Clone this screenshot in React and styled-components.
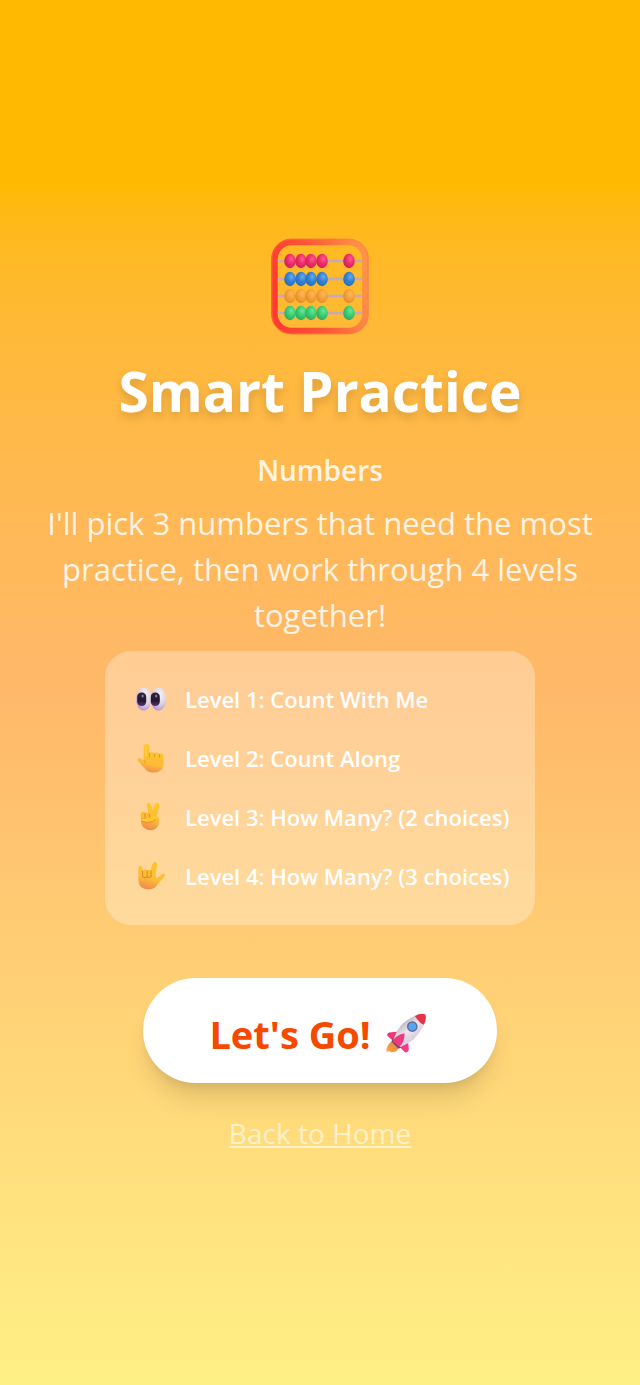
import styled, { createGlobalStyle } from 'styled-components';

const GlobalStyle = createGlobalStyle`
	* {
		box-sizing: border-box;
		margin: 0;
		padding: 0;
	}
	body {
		font-family: 'Segoe UI', 'Open Sans', sans-serif;
	}
`;

const beadRows = [
	{ y: 23, fill: 'url(#beadPink)' },
	{ y: 41, fill: 'url(#beadBlue)' },
	{ y: 58, fill: 'url(#beadOrange)' },
	{ y: 75, fill: 'url(#beadGreen)' },
];

const beadColumns = [19, 30, 40, 51, 78];

const beadColors = [
	['beadPink', '#ff5c92', '#ee2c68', '#c9205a'],
	['beadBlue', '#63adf0', '#3480cf', '#2a6cb8'],
	['beadOrange', '#ffba55', '#f6a038', '#e08a2b'],
	['beadGreen', '#6be894', '#3bcb72', '#2aa95e'],
];

const Abacus = () => (
	<svg width="98" height="98" viewBox="0 0 98 98" aria-hidden="true">
		<defs>
			<linearGradient id="frame" x1="0" y1="0.6" x2="1" y2="0.4">
				<stop offset="0" stopColor="#ff3b2f" />
				<stop offset="0.45" stopColor="#fc5636" />
				<stop offset="1" stopColor="#ff9248" />
			</linearGradient>
			{beadColors.map(([id, light, base, dark]) => (
				<radialGradient key={id} id={id} cx="0.62" cy="0.35" r="0.7">
					<stop offset="0" stopColor={light} />
					<stop offset="0.5" stopColor={base} />
					<stop offset="1" stopColor={dark} />
				</radialGradient>
			))}
		</defs>
		<rect x="3.5" y="4" width="91" height="89" rx="17" fill="none" stroke="url(#frame)" strokeWidth="6.5" />
		<rect x="1" y="1.5" width="96" height="94" rx="19" fill="none" stroke="#ff7a4a" strokeOpacity="0.45" strokeWidth="1.5" />
		{beadRows.map(({ y, fill }) => (
			<g key={y}>
				<rect x="7" y={y - 1.3} width="84" height="2.6" fill="#c5a9b4" />
				{beadColumns.map((x) => (
					<ellipse key={x} cx={x} cy={y} rx="5.8" ry="7.2" fill={fill} />
				))}
			</g>
		))}
	</svg>
);

const Eyes = () => (
	<svg width="32" height="32" viewBox="0 0 32 32" aria-hidden="true">
		<defs>
			<radialGradient id="eyeWhite" cx="0.6" cy="0.3" r="0.75">
				<stop offset="0" stopColor="#f6f2f7" />
				<stop offset="0.55" stopColor="#ddd4e2" />
				<stop offset="1" stopColor="#b291d7" />
			</radialGradient>
			<linearGradient id="pupil" x1="0" y1="0" x2="0" y2="1">
				<stop offset="0" stopColor="#32243c" />
				<stop offset="0.6" stopColor="#25172f" />
				<stop offset="1" stopColor="#56366f" />
			</linearGradient>
		</defs>
		<ellipse cx="8.6" cy="16" rx="7.7" ry="11.5" fill="url(#eyeWhite)" />
		<ellipse cx="23.4" cy="16" rx="7.7" ry="11.5" fill="url(#eyeWhite)" />
		<rect x="2.2" y="9.6" width="9" height="13.4" rx="4.2" fill="url(#pupil)" />
		<rect x="15.8" y="9.6" width="9" height="13.4" rx="4.2" fill="url(#pupil)" />
		<ellipse cx="7.6" cy="13" rx="1.2" ry="1.6" fill="#85788f" />
		<ellipse cx="21.2" cy="13" rx="1.2" ry="1.6" fill="#85788f" />
	</svg>
);

const PointUp = () => (
	<svg width="32" height="32" viewBox="-1 -1 34 34" aria-hidden="true">
		<defs>
			<linearGradient id="skinOne" x1="0.6" y1="0" x2="0.4" y2="1">
				<stop offset="0" stopColor="#ffc62c" />
				<stop offset="0.7" stopColor="#fdbb36" />
				<stop offset="1" stopColor="#ef8750" />
			</linearGradient>
		</defs>
		<path
			d="M8.2 4Q8.2 1 11.3 1Q14.3 1 14.3 4V10.5Q18.3 8.2 19.8 11.2Q23.4 9 25 12Q29.4 10 29.4 14.5V21.5Q29.4 31.5 18.8 31.5Q12.5 31.5 9.2 27L6 23.5L2.5 19.8Q.5 17.5 2.5 16.4Q4.5 15.4 8.2 18.5Z"
			fill="url(#skinOne)"
		/>
		<path d="M14.4 11V14.6M19.8 11.6V14.8M25 12.2V15.4M8.4 18.3Q10.2 20 10 21.5" fill="none" stroke="#e39a2c" strokeWidth="1" strokeLinecap="round" />
		<path d="M10.6 3V14" stroke="#ffd046" strokeWidth="1.4" strokeLinecap="round" />
	</svg>
);

const Victory = () => (
	<svg width="32" height="32" viewBox="-1 -1 34 34" aria-hidden="true">
		<defs>
			<linearGradient id="skinTwo" x1="0.6" y1="0" x2="0.4" y2="1">
				<stop offset="0" stopColor="#ffc829" />
				<stop offset="0.6" stopColor="#fcb837" />
				<stop offset="1" stopColor="#ed884e" />
			</linearGradient>
		</defs>
		<path
			d="M11.5 4Q10.8 1.4 13.3 1.1Q15.5 1 16.3 3.5L18 9.2L19.8 3Q20.7 .5 23 1.2Q25.4 2 24.8 4.6L22.5 14.5Q24.8 16.4 24.6 20.5Q24.2 30 15 30Q7.2 29.5 5.6 22.5L4.8 13.2Q5.2 9.8 8.4 10.6L10.2 11.5L13.2 11Z"
			fill="url(#skinTwo)"
		/>
		<path d="M5.8 18.4L13.6 17.6L16.4 14.6Q21 13.4 22.8 15.4Q23.8 17.6 20.4 18.6L17.2 20.8Q12 22.6 6.2 20.6Z" fill="#ffc731" />
		<path d="M6.4 20.6Q12 23 17.4 21L20.8 18.8M9.6 12.5V17.4M14.2 13L14.6 16" fill="none" stroke="#dd8f2c" strokeWidth="1" strokeLinecap="round" />
	</svg>
);

const LoveYou = () => (
	<svg width="32" height="32" viewBox="-1 -1 34 34" aria-hidden="true">
		<defs>
			<linearGradient id="skinThree" x1="0.6" y1="0" x2="0.3" y2="1">
				<stop offset="0" stopColor="#ffc52b" />
				<stop offset="0.6" stopColor="#fdbb35" />
				<stop offset="1" stopColor="#ee8853" />
			</linearGradient>
		</defs>
		<path
			d="M2.6 8Q2.5 5.1 4.6 5Q6.7 5 7 8V10.4Q9.6 8 12 10Q14 8.6 15.6 10L17.2 4Q18 .8 20.4 1.2Q22.9 1.6 22.5 4.5L20.8 15.6L22 18.4L27.5 14.2Q29.8 12.4 30.8 14.2Q31.4 15.7 29.5 17.6L23.8 23.8Q20.5 30.5 13.4 30.3Q3 30 2.6 21Z"
			fill="url(#skinThree)"
		/>
		<path d="M7 10.8V16.4M12 10.4V16.4M16 10.6V16M7.2 16.6Q9.8 18.8 12 16.6Q14.2 18.6 16.6 16" fill="none" stroke="#d98a2b" strokeWidth="1.1" strokeLinecap="round" />
	</svg>
);

const Rocket = () => (
	<svg width="42" height="42" viewBox="0 0 42 42" aria-hidden="true">
		<defs>
			<linearGradient id="rocketBody" x1="0.2" y1="0.2" x2="0.7" y2="0.8">
				<stop offset="0" stopColor="#b7abbb" />
				<stop offset="0.5" stopColor="#eee7ef" />
				<stop offset="1" stopColor="#d6c6d9" />
			</linearGradient>
			<linearGradient id="rocketFin" x1="0" y1="0" x2="1" y2="1">
				<stop offset="0" stopColor="#e7386e" />
				<stop offset="1" stopColor="#ff388c" />
			</linearGradient>
			<linearGradient id="flame" x1="1" y1="0" x2="0" y2="1">
				<stop offset="0" stopColor="#e5803c" />
				<stop offset="1" stopColor="#ffa544" />
			</linearGradient>
		</defs>
		<path d="M6.8 28.2Q1.5 31.5 1.5 39Q4.6 37.4 5.7 39.2Q11 40 14 34.8Z" fill="url(#flame)" />
		<path d="M14 18.5L4.2 19.6Q1.8 20.3 2.3 22.8L8.5 28.2ZM23 28L23.8 37Q22.5 40.2 20 39.2L13.5 33Z" fill="url(#rocketFin)" />
		<path d="M7.8 25.5L16.2 34.2L13.7 35.8L6.4 28.5Z" fill="#594783" />
		<path d="M8.5 27Q13 10 30 2.8L39 11.6Q31.4 28.6 15.5 34Z" fill="url(#rocketBody)" />
		<path d="M29.8 2.9Q35.5-.2 40.2 1.3Q42.1 6.2 38.9 11.8Q34.3 10.2 29.8 2.9Z" fill="#e63447" />
		<path d="M7.2 28.2Q11.5 21.5 19.6 20.2Q19.8 28.8 14.2 34.3Q12 31 7.2 28.2Z" fill="url(#rocketFin)" />
		<circle cx="27.3" cy="13.6" r="5.3" fill="#596c99" />
		<circle cx="27.3" cy="13.6" r="3.9" fill="#55a5f0" />
	</svg>
);

const levels = [
	{ icon: <Eyes />, label: 'Level 1: Count With Me' },
	{ icon: <PointUp />, label: 'Level 2: Count Along' },
	{ icon: <Victory />, label: 'Level 3: How Many? (2 choices)' },
	{ icon: <LoveYou />, label: 'Level 4: How Many? (3 choices)' },
];

const App = () => (
	<>
		<GlobalStyle />
		<Page>
			<Abacus />
			<Title>Smart Practice</Title>
			<Subject>Numbers</Subject>
			<Intro>I'll pick 3 numbers that need the most practice, then work through 4 levels together!</Intro>
			<LevelList>
				{levels.map(({ icon, label }) => (
					<Level key={label}>
						{icon}
						<span>{label}</span>
					</Level>
				))}
			</LevelList>
			<StartButton type="button">
				<span>Let's Go!</span>
				<Rocket />
			</StartButton>
			<HomeLink href="#home">Back to Home</HomeLink>
		</Page>
	</>
);

const Page = styled.main`
	display: flex;
	flex-direction: column;
	align-items: center;
	justify-content: center;
	min-height: 100vh;
	padding: 34px 32px 32px;
	text-align: center;
	color: #fff;
	background: linear-gradient(
		to bottom in oklab,
		oklch(82.8% 0.189 84.429),
		oklch(83.7% 0.128 66.29) 50%,
		oklch(94.5% 0.129 101.54)
	);
`;

const Title = styled.h1`
	margin-top: 25px;
	font-size: 55px;
	font-weight: 700;
	line-height: 60px;
	text-shadow: 0 5px 10px rgba(0, 0, 0, 0.15);
`;

const Subject = styled.h2`
	margin-top: 29px;
	font-size: 28px;
	font-weight: 600;
	line-height: 40px;
	color: rgba(255, 255, 255, 0.85);
`;

const Intro = styled.p`
	max-width: 580px;
	margin-top: 10px;
	font-size: 31px;
	line-height: 46px;
	color: rgba(255, 255, 255, 0.85);
`;

const LevelList = styled.ul`
	display: flex;
	flex-direction: column;
	gap: 24px;
	width: 430px;
	max-width: 100%;
	margin-top: 13px;
	padding: 31px 24px 31px 30px;
	border-radius: 26px;
	list-style: none;
	background: rgba(255, 255, 255, 0.3);
`;

const Level = styled.li`
	display: flex;
	align-items: center;
	gap: 18px;
	font-size: 22px;
	font-weight: 600;
	line-height: 35px;
	white-space: nowrap;
`;

const StartButton = styled.button`
	display: flex;
	align-items: center;
	gap: 14px;
	margin-top: 53px;
	padding: 28px 70px 20px 66px;
	border: none;
	border-radius: 53px;
	font-family: inherit;
	font-size: 38px;
	font-weight: 700;
	line-height: 57px;
	color: #f54900;
	background: #fff;
	box-shadow: 0 20px 26px -6px rgba(0, 0, 0, 0.12), 0 8px 12px -6px rgba(0, 0, 0, 0.1);
	cursor: pointer;
`;

const HomeLink = styled.a`
	margin-top: 33px;
	font-size: 28px;
	line-height: 34px;
	color: rgba(255, 255, 255, 0.6);
`;

export default App;
